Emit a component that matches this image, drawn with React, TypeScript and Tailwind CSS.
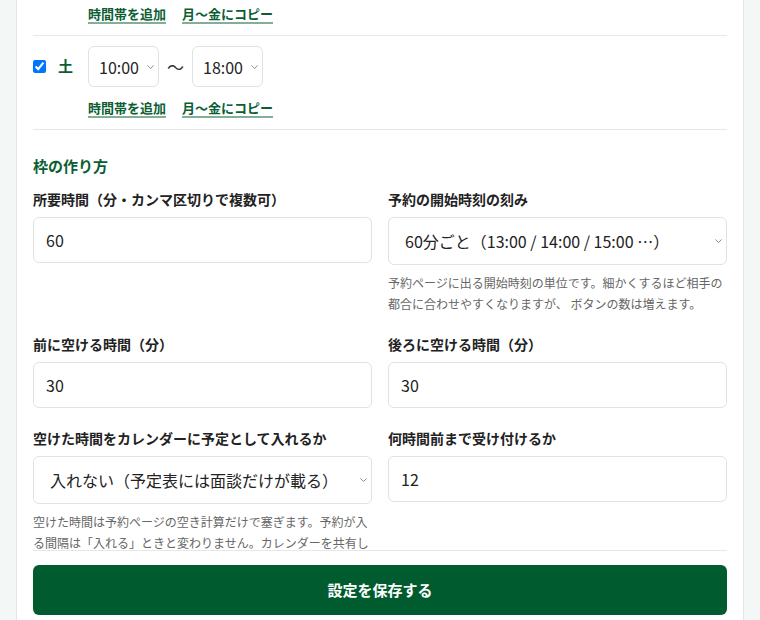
import React from 'react';

const font = { fontFamily: '"Noto Sans CJK JP", "Noto Sans", sans-serif' };

const Chevron = () => (
    <svg
        viewBox="0 0 8 5"
        className="pointer-events-none absolute right-[5px] top-1/2 -translate-y-1/2 w-[7px] h-[5px]"
        fill="none"
        stroke="#7a7a7a"
        strokeWidth="1"
    >
        <path d="M0.5 0.8 L4 4.2 L7.5 0.8" />
    </svg>
);

const DayLinks = () => (
    <div className="flex gap-4 pl-[55px] h-5 leading-5 text-[13px] font-bold text-[#0b5e33]">
        <a className="underline decoration-2 decoration-[#0b5e33]/50 underline-offset-[3px]">時間帯を追加</a>
        <a className="underline decoration-2 decoration-[#0b5e33]/50 underline-offset-[3px]">月〜金にコピー</a>
    </div>
);

const TimeSelect = ({ value }: { value: string }) => (
    <div className="relative w-[71px] h-[41px]">
        <select
            defaultValue={value}
            className="appearance-none w-full h-full pl-[10px] pr-4 text-[16px] text-[#222] bg-white border border-[#dfe3e1] rounded-md"
        >
            <option>{value}</option>
        </select>
        <Chevron />
    </div>
);

const Label = ({ children }: { children: React.ReactNode }) => (
    <label className="block h-5 leading-5 text-[14px] font-bold text-[#222] mb-2">{children}</label>
);

const TextInput = ({ value }: { value: string }) => (
    <input
        defaultValue={value}
        className="block w-full h-[46px] px-3 text-[16px] text-[#222] bg-white border border-[#dfe3e1] rounded-md outline-none"
    />
);

const Select = ({ value }: { value: string }) => (
    <div className="relative h-[48px]">
        <select
            defaultValue={value}
            className="appearance-none block w-full h-full pl-4 pr-6 text-[16px] text-[#222] bg-white border border-[#dfe3e1] rounded-md"
        >
            <option>{value}</option>
        </select>
        <Chevron />
    </div>
);

const Help = ({ children }: { children: React.ReactNode }) => (
    <p className="mt-[7px] text-[12px] leading-[21px] text-[#666]">{children}</p>
);

export default function App() {
    return (
        <div className="h-[620px] overflow-hidden bg-[#f3f7f5] px-4" style={font}>
            <div className="h-[631px] flex flex-col bg-white border-x border-[#e2e7e4] px-4">
                <div className="flex-1 overflow-hidden">
                    {/* previous day row, scrolled past */}
                    <div className="pt-1 pb-[11px] border-b border-[#e6e8e7]">
                        <DayLinks />
                    </div>

                    <div className="pt-[10px] pb-[11px] border-b border-[#e6e8e7]">
                        <div className="flex items-center h-[41px]">
                            <input type="checkbox" defaultChecked className="w-[13px] h-[13px] m-0" />
                            <span className="ml-3 w-[30px] text-[15px] font-bold text-[#0b5e33]">土</span>
                            <TimeSelect value="10:00" />
                            <span className="w-[33px] text-center text-[17px] text-[#333]">〜</span>
                            <TimeSelect value="18:00" />
                        </div>
                        <div className="mt-[11px]">
                            <DayLinks />
                        </div>
                    </div>

                    <h2 className="pt-6 h-[48px] leading-6 text-[15px] font-bold text-[#0b5e33]">枠の作り方</h2>

                    <div className="grid grid-cols-2 gap-x-4 gap-y-5 mt-[11px]">
                        <div>
                            <Label>所要時間（分・カンマ区切りで複数可）</Label>
                            <TextInput value="60" />
                        </div>
                        <div>
                            <Label>予約の開始時刻の刻み</Label>
                            <Select value="60分ごと（13:00 / 14:00 / 15:00 …）" />
                            <Help>予約ページに出る開始時刻の単位です。細かくするほど相手の都合に合わせやすくなりますが、 ボタンの数は増えます。</Help>
                        </div>
                        <div>
                            <Label>前に空ける時間（分）</Label>
                            <TextInput value="30" />
                        </div>
                        <div>
                            <Label>後ろに空ける時間（分）</Label>
                            <TextInput value="30" />
                        </div>
                        <div>
                            <Label>空けた時間をカレンダーに予定として入れるか</Label>
                            <Select value="入れない（予定表には面談だけが載る）" />
                            <Help>空けた時間は予約ページの空き計算だけで塞ぎます。予約が入る間隔は「入れる」ときと変わりません。カレンダーを共有している人に前後の準備時間も見せたい場合は「入れる」を選んでください。</Help>
                        </div>
                        <div>
                            <Label>何時間前まで受け付けるか</Label>
                            <TextInput value="12" />
                        </div>
                    </div>
                </div>

                <div className="border-t border-[#e6e8e7] pt-[14px] pb-4">
                    <button className="w-full h-[50px] rounded-md bg-[#005c2e] text-white text-[15px] font-bold">
                        設定を保存する
                    </button>
                </div>
            </div>
        </div>
    );
}
